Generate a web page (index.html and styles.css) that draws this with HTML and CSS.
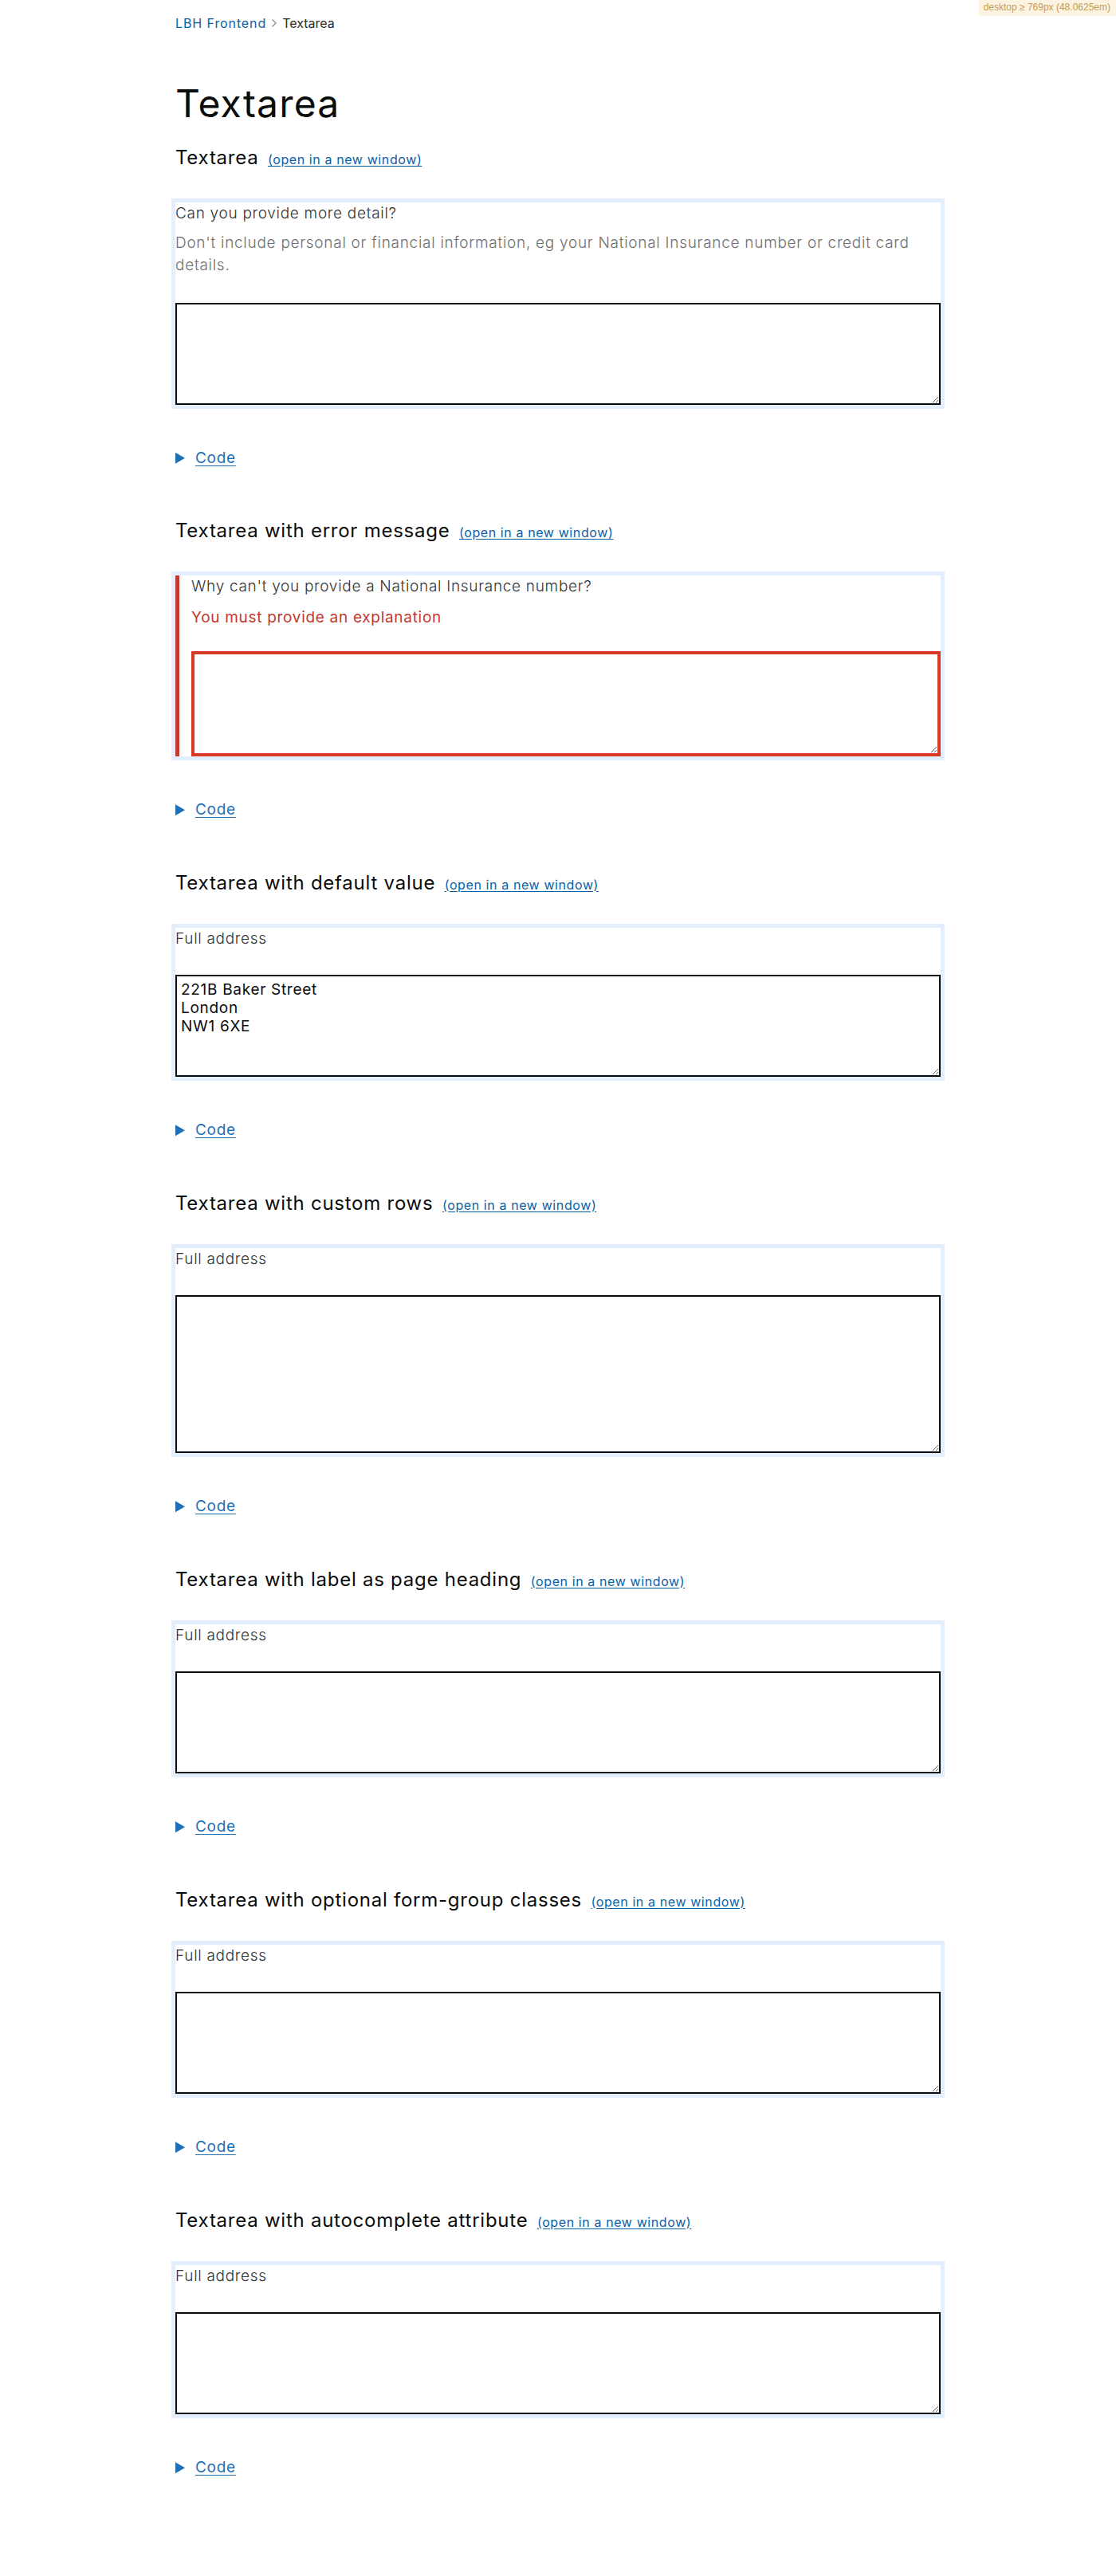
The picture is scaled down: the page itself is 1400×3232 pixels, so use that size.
FILE: index.html
```html
<!DOCTYPE html>
<html lang="en">
<head>
<meta charset="utf-8">
<title>Textarea – LBH Frontend</title>
<link rel="stylesheet" href="styles.css">
</head>
<body>
<div class="mq-badge">desktop ≥ 769px (48.0625em)</div>
<div class="page">
  <nav class="breadcrumbs">
    <a class="crumb-link" href="#">LBH Frontend</a>
    <svg class="crumb-sep" width="8" height="12" viewBox="0 0 8 12"><path d="M1.5 1.5 L6 6 L1.5 10.5" fill="none" stroke="#8a8f92" stroke-width="1.3"/></svg>
    <span class="crumb-current">Textarea</span>
  </nav>

  <h1 class="title">Textarea</h1>

  <section class="example first">
    <h2 class="example-title">Textarea <a class="new-window" href="#">(open in a new window)</a></h2>
    <div class="frame">
      <label class="label with-hint" for="more-detail">Can you provide more detail?</label>
      <div class="hint">Don't include personal or financial information, eg your National Insurance number or credit card details.</div>
      <textarea class="textarea rows-5" id="more-detail"></textarea>
    </div>
    <details class="code"><summary><span class="tri"></span><span class="code-link">Code</span></summary></details>
  </section>

  <section class="example">
    <h2 class="example-title">Textarea with error message <a class="new-window" href="#">(open in a new window)</a></h2>
    <div class="frame">
      <div class="group-error">
        <label class="label with-hint" for="no-ni">Why can't you provide a National Insurance number?</label>
        <div class="error-message">You must provide an explanation</div>
        <textarea class="textarea textarea-error" id="no-ni"></textarea>
      </div>
    </div>
    <details class="code"><summary><span class="tri"></span><span class="code-link">Code</span></summary></details>
  </section>

  <section class="example">
    <h2 class="example-title">Textarea with default value <a class="new-window" href="#">(open in a new window)</a></h2>
    <div class="frame">
      <label class="label" for="addr1">Full address</label>
      <textarea class="textarea rows-5" id="addr1">221B Baker Street
London
NW1 6XE</textarea>
    </div>
    <details class="code"><summary><span class="tri"></span><span class="code-link">Code</span></summary></details>
  </section>

  <section class="example">
    <h2 class="example-title">Textarea with custom rows <a class="new-window" href="#">(open in a new window)</a></h2>
    <div class="frame">
      <label class="label" for="addr2">Full address</label>
      <textarea class="textarea rows-8" id="addr2"></textarea>
    </div>
    <details class="code"><summary><span class="tri"></span><span class="code-link">Code</span></summary></details>
  </section>

  <section class="example">
    <h2 class="example-title">Textarea with label as page heading <a class="new-window" href="#">(open in a new window)</a></h2>
    <div class="frame">
      <label class="label" for="addr3">Full address</label>
      <textarea class="textarea rows-5" id="addr3"></textarea>
    </div>
    <details class="code"><summary><span class="tri"></span><span class="code-link">Code</span></summary></details>
  </section>

  <section class="example">
    <h2 class="example-title">Textarea with optional form-group classes <a class="new-window" href="#">(open in a new window)</a></h2>
    <div class="frame">
      <label class="label" for="addr4">Full address</label>
      <textarea class="textarea rows-5" id="addr4"></textarea>
    </div>
    <details class="code"><summary><span class="tri"></span><span class="code-link">Code</span></summary></details>
  </section>

  <section class="example">
    <h2 class="example-title">Textarea with autocomplete attribute <a class="new-window" href="#">(open in a new window)</a></h2>
    <div class="frame">
      <label class="label" for="addr5">Full address</label>
      <textarea class="textarea rows-5" id="addr5" autocomplete="street-address"></textarea>
    </div>
    <details class="code"><summary><span class="tri"></span><span class="code-link">Code</span></summary></details>
  </section>
</div>
</body>
</html>
```

FILE: styles.css
```css
html, body {
  margin: 0;
  padding: 0;
  background: #ffffff;
}

body {
  font-family: Inter, "Noto Sans", "Liberation Sans", sans-serif;
  color: #0b0c0c;
  min-height: 3232px;
}

.mq-badge {
  position: fixed;
  top: 0;
  right: 0;
  padding: 3px 7px 4px 6px;
  background: #fcf4e1;
  color: #c79a55;
  font-family: "Liberation Sans", Arial, sans-serif;
  font-size: 12px;
  line-height: 13px;
  border-bottom-left-radius: 2px;
}

.page {
  width: 960px;
  margin: 0 auto;
  padding-bottom: 120px;
}

/* Breadcrumbs */
.breadcrumbs {
  display: flex;
  align-items: center;
  padding-top: 19px;
  height: 20px;
  font-size: 16px;
  line-height: 20px;
}

.crumb-link {
  color: #0b5fa5;
  text-decoration: none;
  letter-spacing: 0.9px;
}

.crumb-sep {
  display: block;
  margin: 0 6px 0 6px;
}

.crumb-current {
  color: #2b2b2b;
  letter-spacing: 0;
}

/* Page title */
.title {
  margin: 66px 0 0;
  font-size: 48px;
  line-height: 50px;
  font-weight: 400;
  color: #0b0c0c;
  letter-spacing: 1.2px;
}

/* Example section */
.example {
  margin-top: 62px;
}

.example.first {
  margin-top: 28px;
}

.example-title {
  margin: 0;
  font-size: 24px;
  line-height: 30px;
  font-weight: 400;
  color: #0b0c0c;
  letter-spacing: 0.75px;
}

.new-window {
  margin-left: 4px;
  font-size: 16px;
  letter-spacing: 0.6px;
  color: #0b5fa5;
  text-decoration: underline;
  text-underline-offset: 2px;
}

.frame {
  margin: 34px -5px 0;
  border: 5px solid #e3effc;
  background: #ffffff;
}

.label {
  display: block;
  font-size: 19px;
  line-height: 28.5px;
  font-weight: 300;
  letter-spacing: 0.7px;
  color: #333333;
  margin-bottom: 31px;
}

.label.with-hint {
  margin-bottom: 8px;
}

.hint {
  font-size: 19px;
  line-height: 28.5px;
  font-weight: 300;
  letter-spacing: 0.72px;
  color: #6f6f6f;
  margin-bottom: 32px;
}

.group-error {
  border-left: 5px solid #bf3a31;
  padding-left: 15px;
}

.error-message {
  margin-top: 10px;
  margin-bottom: 28px;
  font-size: 19px;
  line-height: 28.5px;
  letter-spacing: 0.7px;
  color: #c13a30;
}

.textarea {
  display: block;
  box-sizing: border-box;
  width: 100%;
  margin: 0;
  padding: 5px;
  border: 2px solid #0b0c0c;
  border-radius: 0;
  font-family: Inter, "Noto Sans", "Liberation Sans", sans-serif;
  font-size: 19px;
  line-height: 23px;
  letter-spacing: 0.7px;
  color: #0b0c0c;
  background: #ffffff;
}

.rows-5 {
  height: 128px;
}

.rows-8 {
  height: 198px;
}

.textarea-error {
  border: 4px solid #d63a22;
  height: 132px;
}

/* Code details */
.code {
  margin-top: 48px;
}

.code summary {
  display: flex;
  align-items: center;
  gap: 13px;
  list-style: none;
  cursor: pointer;
  font-size: 19px;
  line-height: 28.5px;
  letter-spacing: 0.7px;
}

.code summary::-webkit-details-marker {
  display: none;
}

.tri {
  width: 12px;
  height: 14px;
  background: #1d70b8;
  clip-path: polygon(0 0, 100% 50%, 0 100%);
}

.code-link {
  color: #1d70b8;
  text-decoration: underline;
  text-underline-offset: 3px;
}
```
